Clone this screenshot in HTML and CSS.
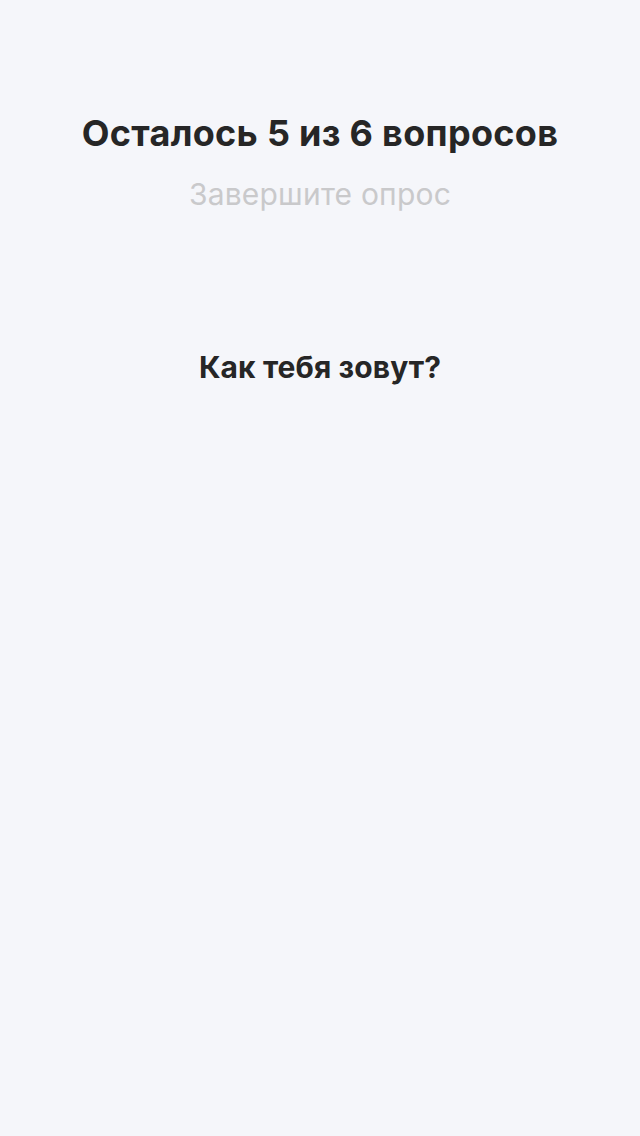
FILE: index.html
```html
<!DOCTYPE html>
<html lang="ru">
<head>
<meta charset="utf-8">
<link rel="stylesheet" href="styles.css">
</head>
<body>
<main class="screen">
  <header class="head">
    <h1 class="title">Осталось 5 из 6 вопросов</h1>
    <p class="subtitle">Завершите опрос</p>
  </header>
  <section class="question">
    <h2 class="q-text">Как тебя зовут?</h2>
  </section>
</main>
</body>
</html>
```
FILE: styles.css
```css
html, body {
  margin: 0;
  padding: 0;
  background: #f5f6fa;
}
.screen {
  width: 640px;
  height: 1136px;
  display: flex;
  flex-direction: column;
  align-items: center;
  font-family: Inter, "Noto Sans", sans-serif;
  color: #262626;
}
.head {
  padding-top: 112px;
  display: flex;
  flex-direction: column;
  align-items: center;
}
.title {
  margin: 0;
  font-size: 36px;
  line-height: 42px;
  font-weight: 700;
  letter-spacing: 0.3px;
}
.subtitle {
  margin: 23px 0 0;
  font-size: 30px;
  line-height: 34px;
  font-weight: 400;
  color: #c9c9cb;
  letter-spacing: 0.2px;
}
.question {
  margin-top: 138px;
}
.q-text {
  margin: 0;
  font-size: 30px;
  line-height: 36px;
  font-weight: 700;
  letter-spacing: 0.1px;
}
```
